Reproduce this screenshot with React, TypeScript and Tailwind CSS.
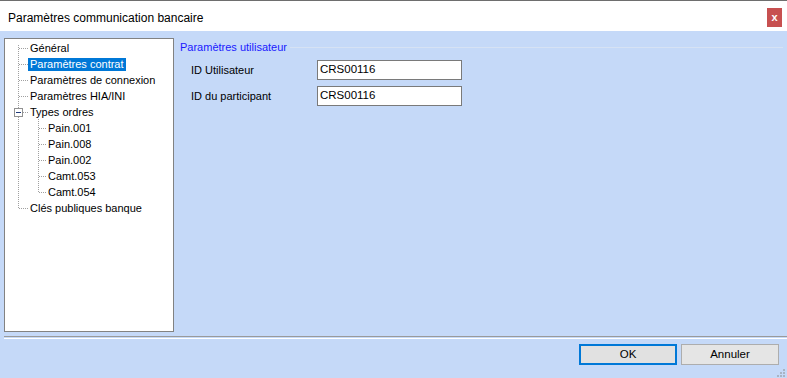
import React from "react";

const font = { fontFamily: '"Liberation Sans", Arial, sans-serif' };

type Node = { label: string; depth: 0 | 1; selected?: boolean };

const nodes: Node[] = [
  { label: "Général", depth: 0 },
  { label: "Paramètres contrat", depth: 0, selected: true },
  { label: "Paramètres de connexion", depth: 0 },
  { label: "Paramètres HIA/INI", depth: 0 },
  { label: "Types ordres", depth: 0 },
  { label: "Pain.001", depth: 1 },
  { label: "Pain.008", depth: 1 },
  { label: "Pain.002", depth: 1 },
  { label: "Camt.053", depth: 1 },
  { label: "Camt.054", depth: 1 },
  { label: "Clés publiques banque", depth: 0 },
];

// connector lines of the tree view
const TreeLines = () => {
  const rowY = (i: number) => 9.5 + 16 * i;
  const dot = { stroke: "#a0a0a0", strokeWidth: 1, strokeDasharray: "1 1", shapeRendering: "crispEdges" as const };
  return (
    <svg className="absolute left-0 top-0" width="168" height="200">
      <line x1="13.5" y1="6" x2="13.5" y2="69" {...dot} />
      <line x1="13.5" y1="78" x2="13.5" y2={rowY(10)} {...dot} />
      {[0, 1, 2, 3, 10].map((i) => (
        <line key={i} x1="13.5" y1={rowY(i)} x2="23" y2={rowY(i)} {...dot} />
      ))}
      <line x1="18" y1={rowY(4)} x2="23" y2={rowY(4)} {...dot} />
      <line x1="33.5" y1="80" x2="33.5" y2={rowY(9)} {...dot} />
      {[5, 6, 7, 8, 9].map((i) => (
        <line key={i} x1="33.5" y1={rowY(i)} x2="42" y2={rowY(i)} {...dot} />
      ))}
      <rect x="9.5" y="69.5" width="8" height="8" fill="#fff" stroke="#919191" shapeRendering="crispEdges" />
      <line x1="11" y1="73.5" x2="16" y2="73.5" stroke="#1f3a7a" shapeRendering="crispEdges" />
    </svg>
  );
};

const Field = ({ label, value }: { label: string; value: string }) => (
  <div className="flex h-[20px] items-center">
    <span className="w-[143px] pl-[17px] text-[11px] text-black">{label}</span>
    <div className="flex h-[20px] w-[145px] items-center border border-[#7a7a7a] bg-white pl-[2px] text-[11.5px] text-black">
      {value}
    </div>
  </div>
);

export default function App() {
  return (
    <div className="flex h-[378px] w-[787px] flex-col overflow-hidden bg-[#c5d9f8]" style={font}>
      {/* title bar */}
      <div className="flex h-[31px] items-start border-t border-[#6e6e6e] bg-white">
        <span className="mt-[8px] pl-[8px] text-[12px] text-black">Paramètres communication bancaire</span>
        <div className="ml-auto mr-[5px] mt-[7px] flex h-[19px] w-[15px] items-center justify-center bg-[#c75050] text-[11px] font-bold leading-none text-white">
          x
        </div>
      </div>

      {/* body */}
      <div className="flex h-[305px] px-[4px] pt-[7px]">
        <div className="relative h-[294px] w-[170px] border border-[#828282] bg-white pt-[1px] text-[11px]">
          <TreeLines />
          {nodes.map((n) => (
            <div key={n.label} className="flex h-[16px] items-center">
              <span
                className={
                  (n.depth === 0 ? "ml-[23px] " : "ml-[41px] ") +
                  (n.selected ? "bg-[#0078d7] text-white " : "text-black ") +
                  "relative h-[13px] px-[2px] leading-[13px]"
                }
              >
                {n.label}
              </span>
            </div>
          ))}
        </div>

        <div className="flex flex-1 flex-col">
          <div className="flex h-[18px] items-center pl-[6px]">
            <span className="text-[11px] text-[#1a1aff]">Paramètres utilisateur</span>
            <div className="ml-[3px] h-px flex-1 bg-[#d6e2f4]" />
          </div>
          <div className="mt-[4px] flex flex-col gap-[6px]">
            <Field label="ID Utilisateur" value="CRS00116" />
            <Field label="ID du participant" value="CRS00116" />
          </div>
        </div>
      </div>

      {/* footer */}
      <div className="ml-[4px] h-px bg-[#9a9a9a]" />
      <div className="h-px" />
      <div className="ml-[4px] h-px bg-white" />
      <div className="flex justify-end gap-[4px] pr-[8px] pt-[5px]">
        <button className="flex h-[21px] w-[98px] items-center justify-center border-2 border-[#0078d7] bg-[#e1e1e1] text-[11.5px] text-black">
          OK
        </button>
        <button className="flex h-[21px] w-[98px] items-center justify-center border border-[#adadad] bg-[#e5e5e5] text-[11.5px] text-black">
          Annuler
        </button>
      </div>
      <div className="flex flex-1 items-end justify-end pb-[1px] pr-[2px]">
        <svg width="8" height="8">
          {[
            [6, 0],
            [6, 3],
            [3, 3],
            [6, 6],
            [3, 6],
            [0, 6],
          ].map(([x, y]) => (
            <rect key={`${x}-${y}`} x={x} y={y} width="2" height="2" fill="#a8b4c4" />
          ))}
        </svg>
      </div>
    </div>
  );
}
